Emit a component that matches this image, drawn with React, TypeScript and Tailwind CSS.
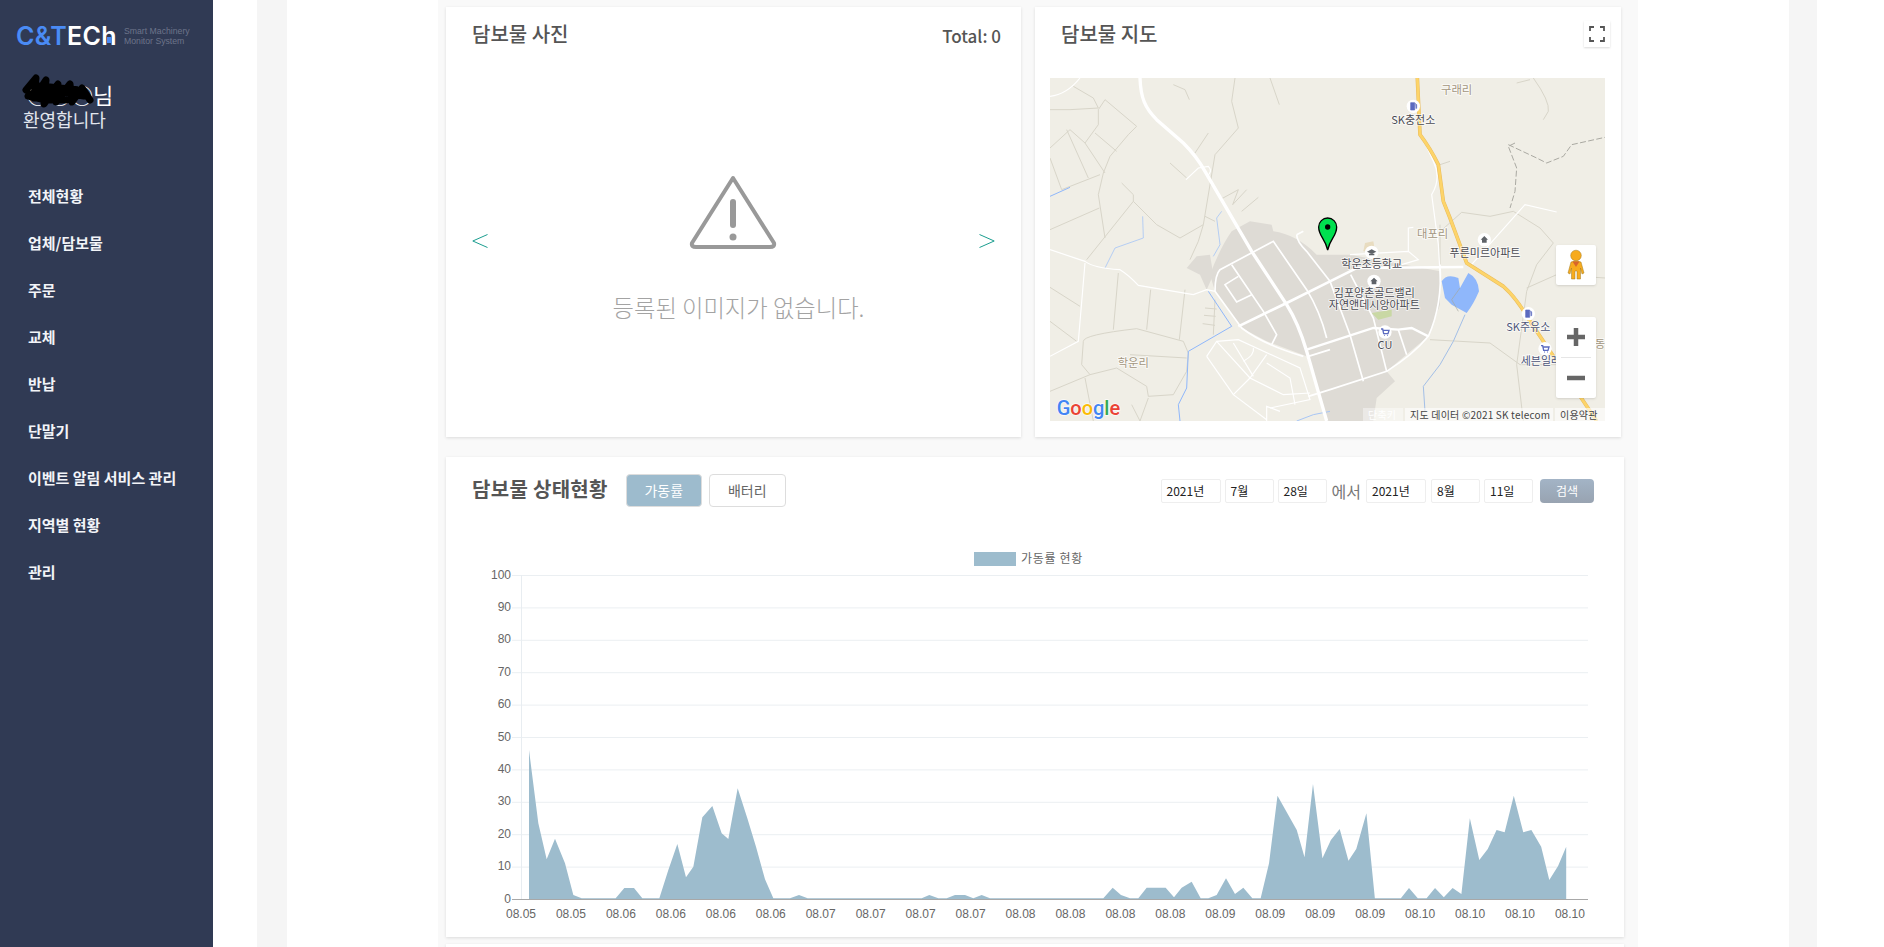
import React from "react";

const nav = ["전체현황", "업체/담보물", "주문", "교체", "반납", "단말기", "이벤트 알림 서비스 관리", "지역별 현황", "관리"];

const z4: number[][] = [[267,1348],[267,900],[295,1120],[320,1228],[345,1166],[375,1240],[400,1335],[425,1345],[527,1345],[553,1314],[582,1314],[607,1345],[658,1345],[685,1260],[712,1182],[738,1282],[760,1250],[787,1102],[817,1068],[845,1150],[865,1167],[893,1015],[922,1105],[948,1190],[975,1288],[1000,1345],[1050,1345],[1077,1335],[1103,1345],[1445,1345],[1468,1335],[1495,1345]];
const z6: number[][] = [[140,595],[165,585],[195,585],[220,595],[245,585],[270,595],[610,595],[638,563],[663,585],[690,595],[715,595],[740,563],[797,563],[822,592],[845,563],[875,545],[902,595],[925,595],[950,585],[978,535],[1005,582],[1030,563],[1057,595],[1082,595]];
const z5: number[][] = [[500,1240],[525,1037],[582,1140],[605,1222],[630,1002],[658,1225],[683,1170],[709,1137],[735,1232],[758,1197],[788,1090],[813,1345],[890,1345],[914,1314],[940,1345],[966,1345],[991,1314],[1017,1342],[1043,1314],[1069,1332],[1094,1105],[1122,1230],[1147,1197],[1173,1140],[1197,1147],[1224,1037],[1252,1147],[1276,1140],[1305,1190],[1329,1290],[1355,1248],[1379,1190],[1379,1348]];
const areaPoints = [
  ...z4.map(([x, y]) => `${440 + x / 3},${450 + y / 3}`),
  ...z6.map(([x, y]) => `${900 + x / 3},${700 + y / 3}`),
  ...z5.map(([x, y]) => `${1100 + x / 2.958},${450 + y / 3}`),
].join(" ");

const xLabels = ["08.05","08.05","08.06","08.06","08.06","08.06","08.07","08.07","08.07","08.07","08.08","08.08","08.08","08.08","08.09","08.09","08.09","08.09","08.10","08.10","08.10","08.10"];
const yLabels = [100, 90, 80, 70, 60, 50, 40, 30, 20, 10, 0];

function Chart() {
  return (
    <svg className="block" width={1178} height={394} viewBox="446 543 1178 394">
      <rect x={974} y={552} width={42} height={14} fill="#9dbccd" />
      <text x={1021} y={563} fontSize={12} letterSpacing={0.7} fill="#666" className="font-['Noto_Sans_CJK_KR',sans-serif]">가동률 현황</text>
      {yLabels.map((v, i) => {
        const y = 575.5 + i * 32.4;
        return (
          <g key={v}>
            {v !== 0 && <line x1={512} x2={1588} y1={y} y2={y} stroke="#ebeff2" />}
            <text x={511} y={y + 3} textAnchor="end" fontSize={12} fill="#666" className="font-['Liberation_Sans',sans-serif]">{v}</text>
          </g>
        );
      })}
      <line x1={521.5} x2={521.5} y1={575} y2={899} stroke="#e8edf1" />
      <polygon points={areaPoints} fill="#9dbccd" />
      <line x1={512} x2={1588} y1={899.5} y2={899.5} stroke="#a8a8a8" />
      {xLabels.map((l, i) => (
        <text key={i} x={521 + i * 49.95} y={918} textAnchor="middle" fontSize={12} fill="#666" className="font-['Liberation_Sans',sans-serif]">{l}</text>
      ))}
    </svg>
  );
}

const rural = [
  "M0 95 L60 95 L145 90 L130 60 L70 25","M145 95 L165 65 L260 145 L235 170 L180 235 L160 285 L145 350 L165 480","M145 95 L145 140 L105 195 L60 155 L0 210","M105 195 L165 285","M135 165 L200 220","M50 155 L115 300","M150 290 L35 335 L0 240","M148 390 L0 455","M250 370 L110 545","M215 315 L250 350 L250 370 L320 440 L390 480 L460 440 L495 230 L565 150 L545 70 L555 0","M360 255 L410 300","M435 225 L475 165","M370 20 L405 35 L418 65","M660 0 L688 80","M460 440 L445 490 L420 545","M465 415 L495 430","M510 365 L565 335 L548 380 L590 335","M575 400 L625 358",
  "M205 585 L190 755","M302 635 L290 755","M405 635 L388 785","M0 628 L90 685","M0 730 L80 790","M100 790 Q100 770 260 752 L400 790 L415 825 L410 880 L370 950 L295 955 L290 925 L200 870 L120 890 L95 860 Z","M120 890 L0 940","M465 690 L500 693","M462 712 L497 715","M458 737 L495 742","M495 665 L490 770","M295 960 L270 1029","M245 980 L270 1029","M240 830 L410 840","M105 900 L130 1029",
  "M1450 0 Q1500 70 1495 100 L1480 125","M1400 15 L1440 5","M1160 470 L1235 403 L1320 415 L1390 400 L1470 450 L1510 495 L1460 560 L1430 640 L1400 860 L1420 1029","M1430 630 L1520 590 L1665 600","M1140 785 L1320 795 L1410 860 L1520 860","M1170 260 L1200 250","M1170 440 L1170 560",
];
const roadsThin = [
  "M0 515 L105 550 Q130 570 210 575 Q235 590 265 622 L430 650 L470 635 L495 640","M105 555 L85 790 L0 835","M0 55 Q50 50 90 0","M408 305 L445 270 L475 265 Q490 280 470 295",
  "M1125 195 L1150 250 Q1175 300 1145 350 L1165 500 L1172 620","M1075 520 L1075 450 L1090 448","M900 530 L1075 520 L1105 545 L1055 560","M1260 565 L1425 380 L1520 402",
  "M470 835 L500 790 L565 785 L750 870 L780 965 L660 990","M470 835 L550 950 L650 1025","M500 790 L600 900 L700 950 L780 945","M550 795 L610 895","M650 830 L600 900 L550 950","M610 810 Q615 830 580 850","M650 855 L720 900 L735 980","M690 1000 L650 985 L650 1029",
];
const roadsMid = [
  "M495 640 Q495 590 510 575 L670 490 L770 635 Q810 700 830 780","M545 560 L640 700 L680 770 L665 800","M565 595 L525 620 L560 672 L605 650","M495 640 L575 750 Q640 800 760 835","M740 470 L760 460 M740 470 Q740 490 770 520 L840 610",
  "M902 590 L970 720 L1010 880","M840 610 L900 770 L940 910","M1045 755 L1070 830","M775 835 L840 815","M1170 560 Q1178 680 1135 775 Q1090 830 1010 880 L840 935 L775 955",
];

type L = { t: string; x: number; y: number; c?: string; a?: "middle" | "start"; s?: number };
const labels: L[] = [
  { t: "구래리", x: 1220, y: 48, c: "#a39680", s: 34 },
  { t: "SK충전소", x: 1090, y: 138, c: "#4a4a52" },
  { t: "대포리", x: 1148, y: 481, c: "#a39680", s: 34 },
  { t: "푸른미르아파트", x: 1305, y: 536, c: "#4a4a52" },
  { t: "학운초등학교", x: 965, y: 571, c: "#4a4a52" },
  { t: "CU", x: 1005, y: 814, c: "#4a4a52" },
  { t: "SK주유소", x: 1435, y: 759, c: "#4d5578" },
  { t: "세븐일레븐", x: 1412, y: 861, c: "#4d5578", a: "start" },
  { t: "동", x: 1650, y: 811, c: "#a39680" },
  { t: "학운리", x: 250, y: 866, c: "#a39680", s: 34 },
];
const pois = [
  { x: 1090, y: 85, k: "gas" },
  { x: 1435, y: 707, k: "gas" },
  { x: 1303, y: 485, k: "home" },
  { x: 972, y: 610, k: "home" },
  { x: 965, y: 523, k: "school" },
  { x: 1005, y: 762, k: "cart" },
  { x: 1485, y: 812, k: "cart" },
];

function MapDrawing() {
  return (
    <svg className="block font-['Noto_Sans_CJK_KR',sans-serif]" width={555} height={343} viewBox="0 0 1665 1029">
      <rect width={1665} height={1029} fill="#f0eee6" />
      <path d="M480 590 Q510 510 545 460 L600 430 L665 440 L670 460 Q740 470 800 530 L900 530 L1170 580 L1170 680 L1135 775 L1010 880 L1035 910 L980 960 L970 1029 L830 1029 L770 835 L650 790 L575 750 L495 640 Z" fill="#dedbd5" />
      <path d="M410 570 L440 535 L480 530 L490 590 L470 635 L450 590 Z" fill="#dedbd5" />
      <path d="M940 520 L945 495 L970 490 L975 520 Z" fill="#e8dcc0" />
      <path d="M965 705 L1025 695 L1025 715 L985 725 Z" fill="#c9d8a4" />
      {rural.map((d, i) => <path key={i} d={d} fill="none" stroke="#d8d5c9" strokeWidth={3} />)}
      <path d="M1395 195 L1375 205 L1400 270 L1395 340 L1380 390" fill="none" stroke="#aaa9a2" strokeWidth={3} strokeDasharray="18 7" />
      <path d="M1375 200 L1460 240 L1490 255 L1540 235 L1565 200 L1665 178" fill="none" stroke="#aaa9a2" strokeWidth={3} strokeDasharray="18 7" />
      <path d="M0 355 L60 328" fill="none" stroke="#8fb7fb" strokeWidth={3} />
      <path d="M165 570 L195 510 L280 480 L278 415" fill="none" stroke="#a8c6f5" strokeWidth={2.5} />
      <path d="M515 400 L500 420 L510 500 L490 535" fill="none" stroke="#a8c6f5" strokeWidth={2.5} />
      <path d="M475 640 L545 745 L415 820 L410 930 L385 980 L390 1029" fill="none" stroke="#8fb7fb" strokeWidth={3} />
      <path d="M1245 710 L1210 790 L1170 860 L1120 925 L1125 1000" fill="none" stroke="#a3bfe6" strokeWidth={3} />
      <path d="M740 1029 L790 1010 L840 1000" fill="none" stroke="#a8c6f5" strokeWidth={3} />
      <path d="M1175 610 Q1190 585 1225 600 L1230 630 L1255 585 Q1285 600 1287 640 Q1270 680 1250 705 L1205 680 L1185 660 Z" fill="#8fb7fb" />
      <path d="M1230 630 L1205 665 L1225 700" fill="none" stroke="#a5a79f" strokeWidth={2} />
      {roadsThin.map((d, i) => <path key={i} d={d} fill="none" stroke="#fff" strokeWidth={3.5} />)}
      {roadsMid.map((d, i) => <path key={i} d={d} fill="none" stroke="#fff" strokeWidth={5} />)}
      <path d="M270 0 C272 60 285 90 320 125 L400 195 Q440 235 465 280 L605 520 L710 680 Q745 735 770 820 L830 1029" fill="none" stroke="#fff" strokeWidth={10} />
      <path d="M565 745 L710 675 L840 610 L920 570 L1240 567" fill="none" stroke="#fff" strokeWidth={8} />
      <path d="M770 815 L970 750 L1045 755 L1085 750 L1135 775" fill="none" stroke="#fff" strokeWidth={7} />
      <path d="M1102 0 L1110 170 Q1140 210 1165 260 L1180 370 L1200 420 L1250 555 L1360 625 Q1400 660 1440 730 L1640 1029" fill="none" stroke="#e8bb5e" strokeWidth={11} />
      <path d="M1102 0 L1110 170 Q1140 210 1165 260 L1180 370 L1200 420 L1250 555 L1360 625 Q1400 660 1440 730 L1640 1029" fill="none" stroke="#fdd469" strokeWidth={8} />
      {pois.map((p, i) => (
        <g key={i} transform={`translate(${p.x} ${p.y})`}>
          <circle r={20} fill="#fff" />
          {p.k === "gas" && <path d="M-8 -11 H4 V11 H-8 Z M6 -9 L10 -5 V6 H7" fill="#5c6bc0" stroke="#5c6bc0" strokeWidth={2} />}
          {p.k === "home" && <path d="M0 -11 L11 0 H7 V9 H-7 V0 H-11 Z" fill="#5f6368" />}
          {p.k === "school" && <path d="M0 -9 L14 -2 L0 5 L-14 -2 Z M-8 4 V9 H8 V4" fill="#5f6368" />}
          {p.k === "cart" && <path d="M-12 -9 H-7 L-4 5 H9 L12 -5 H-6 M-3 10 H-1 M6 10 H8" fill="none" stroke="#5c6bc0" strokeWidth={4} />}
        </g>
      ))}
      {labels.map((l, i) => (
        <text key={i} x={l.x} y={l.y} textAnchor={l.a ?? "middle"} fontSize={l.s ?? 33} fill={l.c} stroke="#fff" strokeOpacity={0.75} strokeWidth={5} className="[paint-order:stroke]">{l.t}</text>
      ))}
      <text textAnchor="middle" fontSize={33} fill="#4a4a52" stroke="#fff" strokeOpacity={0.75} strokeWidth={5} className="[paint-order:stroke]">
        <tspan x={973} y={658}>김포양촌골드밸리</tspan>
        <tspan x={973} y={693}>자연앤데시앙아파트</tspan>
      </text>
      <path d="M833 516 C825 480 806 475 806 447 A27 27 0 1 1 860 447 C860 475 841 480 833 516 Z" fill="#00e04f" stroke="#000" strokeWidth={4} />
      <circle cx={833} cy={447} r={8} fill="#000" />
      <text x={20} y={1012} fontSize={60} fontWeight={500} stroke="#fff" strokeOpacity={0.8} strokeWidth={4} className="font-['Roboto',sans-serif] [paint-order:stroke]">
        <tspan fill="#4285f4">G</tspan><tspan fill="#ea4335">o</tspan><tspan fill="#fbbc05">o</tspan><tspan fill="#4285f4">g</tspan><tspan fill="#34a853">l</tspan><tspan fill="#ea4335">e</tspan>
      </text>
    </svg>
  );
}

function MapView() {
  return (
    <div className="relative w-[555px] h-[343px] overflow-hidden ml-[15px] mt-[29px]">
      <MapDrawing />
      <div className="absolute right-0 bottom-0 h-[13px] flex text-[10px] leading-[13px] tracking-[0.2px] text-[#444]">
        <span className="bg-white/40 text-white px-[5px] w-[40px] mr-[2px] whitespace-nowrap">단축키</span>
        <span className="bg-white/60 pl-[5px] w-[148px] mr-[2px] whitespace-nowrap">지도 데이터 ©2021 SK telecom</span>
        <span className="bg-white/60 pl-[5px] w-[50px] whitespace-nowrap">이용약관</span>
      </div>
      <div className="absolute left-[506px] top-[167px] w-[40px] h-[40px] bg-white rounded-[2px] shadow-sm">
        <svg width={40} height={40} viewBox="0 0 40 40">
          <circle cx={20} cy={10.5} r={5.3} fill="#f7ab1e" stroke="#a07a20" strokeWidth={0.5} />
          <path d="M15 17 Q20 15 25 17 L28 28 L26 29 L24.5 23 V34 H21 V26 H19 V34 H15.5 V23 L14 29 L12 28 Z" fill="#f7ab1e" stroke="#a07a20" strokeWidth={0.5} />
          <path d="M16.5 16.5 H23.5 L20 22 Z" fill="#d8662a" />
        </svg>
      </div>
      <div className="absolute left-[506px] top-[239px] w-[40px] h-[81px] bg-white rounded-[2px] shadow-sm">
        <svg width={40} height={81} viewBox="0 0 40 81">
          <path d="M11 20 H29 M20 11 V29" stroke="#666" strokeWidth={4.5} />
          <path d="M5 40.5 H35" stroke="#e6e6e6" />
          <path d="M11 61 H29" stroke="#666" strokeWidth={4.5} />
        </svg>
      </div>
    </div>
  );
}

function Select({ text, w }: { text: string; w: string }) {
  return <div className={`h-[24px] ${w} border border-[#eeeeee] rounded-[2px] pl-[5px] text-[12px] leading-[22px] text-[#222] bg-white`}>{text}</div>;
}

export default function App() {
  return (
    <div className="flex h-screen overflow-hidden bg-white font-['Noto_Sans_CJK_KR',sans-serif]">
      <aside className="relative w-[213px] shrink-0 bg-[#303a54] text-white">
        <div className="flex items-center pl-[16px] pt-[21px] h-[50px]">
          <div className="w-[102px] text-[25px] leading-[24px] font-semibold tracking-[0.3px] font-['Inter',sans-serif] whitespace-nowrap">
            <span className="text-[#4a8bf5]">C&amp;T</span><span>ECh</span>
          </div>
          <div className="ml-[6px] text-[8.7px] leading-[10px] text-[#6d748a] font-['Liberation_Sans',sans-serif] whitespace-nowrap">
            <div>Smart Machinery</div>
            <div>Monitor System</div>
          </div>
        </div>
        <div className="absolute left-[107px] top-[37px] w-[4px] h-[6px] bg-[#4a8bf5]" />
        <div className="pl-[27px] mt-[29px] text-[22px] leading-[30px] text-white whitespace-nowrap">○○○님</div>
        <div className="pl-[23px] mt-[-3px] text-[18px] leading-[26px] text-[#e2e6ee] whitespace-nowrap">환영합니다</div>
        <svg className="absolute left-[22px] top-[74px]" width={72} height={36} viewBox="0 0 72 36">
          <path d="M4 16 L14 4 L12 24 L24 6 L22 30 L36 10 L34 28 L48 10 L50 28 L60 14 L68 26 M8 20 L40 18 L62 22 M6 22 L24 26 L44 26 M18 12 L58 16" fill="none" stroke="#000" strokeWidth={7} strokeLinecap="round" strokeLinejoin="round" />
        </svg>
        <nav className="mt-[41px] pl-[28px]">
          {nav.map((n) => (
            <div key={n} className="h-[47px] flex items-center text-[15px] font-bold text-[#f2f4f8] whitespace-nowrap">{n}</div>
          ))}
        </nav>
      </aside>
      <main className="flex-1 pl-[44px] pr-[67px]">
        <div className="h-full bg-[#f5f5f5] pl-[30px] pr-[28px]">
          <div className="h-full bg-white pl-[151px] pr-[151px]">
            <div className="h-full bg-[#f9f9f9] pl-[8px] pr-[14px] pt-[7px]">
              <div className="flex gap-[14px]">
                <section className="w-[575px] h-[430px] bg-white shadow-[0_1px_3px_rgba(0,0,0,0.12)]">
                  <div className="flex justify-between items-start pl-[26px] pr-[20px] pt-[12px]">
                    <h2 className="text-[20px] leading-[30px] font-medium text-[#555]">담보물 사진</h2>
                    <span className="text-[17px] leading-[24px] font-medium text-[#555] mt-[5px]">Total: 0</span>
                  </div>
                  <div className="flex justify-between items-start pl-[26px] pr-[26px]">
                    <svg className="mt-[185px]" width={16} height={14} viewBox="0 0 16 14"><path d="M15.5 .5 L.8 7 L15.5 13.5" fill="none" stroke="#1a9d8f" strokeWidth={1} /></svg>
                    <div className="flex flex-col items-center mt-[126px]">
                      <svg width={88} height={75} viewBox="0 0 88 75">
                        <path d="M44 3 L85 68 Q86 72 81 72 H7 Q2 72 3 68 Z" fill="none" stroke="#999" strokeWidth={4} strokeLinejoin="round" />
                        <path d="M44 27 V50" stroke="#999" strokeWidth={6} strokeLinecap="round" />
                        <circle cx={44} cy={62} r={3.5} fill="#999" />
                      </svg>
                      <p className="mt-[41px] ml-[10px] text-[23.3px] leading-[32px] font-light text-[#a3a3a3] whitespace-nowrap">등록된 이미지가 없습니다.</p>
                    </div>
                    <svg className="mt-[185px]" width={16} height={14} viewBox="0 0 16 14"><path d="M.5 .5 L15.2 7 L.5 13.5" fill="none" stroke="#1a9d8f" strokeWidth={1} /></svg>
                  </div>
                </section>
                <section className="w-[586px] h-[430px] bg-white shadow-[0_1px_3px_rgba(0,0,0,0.12)]">
                  <div className="flex justify-between items-start pl-[26px] pr-[11px] pt-[12px]">
                    <h2 className="text-[20px] leading-[30px] font-medium text-[#555]">담보물 지도</h2>
                    <div className="w-[26px] h-[26px] mt-[2px] bg-white shadow-[0_1px_2px_rgba(0,0,0,0.15)] flex items-center justify-center">
                      <svg width={16} height={16} viewBox="0 0 16 16"><path d="M1 5 V1 H5 M11 1 H15 V5 M15 11 V15 H11 M5 15 H1 V11" fill="none" stroke="#555" strokeWidth={1.8} /></svg>
                    </div>
                  </div>
                  <MapView />
                </section>
              </div>
              <section className="mt-[20px] h-[480px] bg-white shadow-[0_1px_3px_rgba(0,0,0,0.12)]">
                <div className="flex items-start pl-[26px] pt-[17px] h-[86px]">
                  <h2 className="text-[20px] leading-[30px] font-bold tracking-[0.3px] text-[#555] whitespace-nowrap">담보물 상태현황</h2>
                  <button className="ml-[18px] w-[76px] h-[33px] bg-[#9dbbcd] border border-[#dddddd] rounded-[4px] text-[14px] text-white">가동률</button>
                  <button className="ml-[7px] w-[77px] h-[33px] bg-white border border-[#dddddd] rounded-[4px] text-[14px] text-[#666]">배터리</button>
                  <div className="ml-auto mr-[30px] mt-[5px] flex items-center">
                    <Select text="2021년" w="w-[60px]" />
                    <div className="ml-[4px]"><Select text="7월" w="w-[49px]" /></div>
                    <div className="ml-[4px]"><Select text="28일" w="w-[49px]" /></div>
                    <span className="mx-[5px] text-[16px] leading-[22px] text-[#777] whitespace-nowrap">에서</span>
                    <Select text="2021년" w="w-[60px]" />
                    <div className="ml-[5px]"><Select text="8월" w="w-[49px]" /></div>
                    <div className="ml-[4px]"><Select text="11일" w="w-[49px]" /></div>
                    <button className="ml-[7px] w-[54px] h-[24px] rounded-[4px] bg-gradient-to-b from-[#a3b4c6] to-[#98a3b1] text-[12px] text-white">검색</button>
                  </div>
                </div>
                <Chart />
              </section>
              <section className="mt-[7px] h-[200px] bg-white shadow-[0_1px_3px_rgba(0,0,0,0.12)]" />
            </div>
          </div>
        </div>
      </main>
    </div>
  );
}
